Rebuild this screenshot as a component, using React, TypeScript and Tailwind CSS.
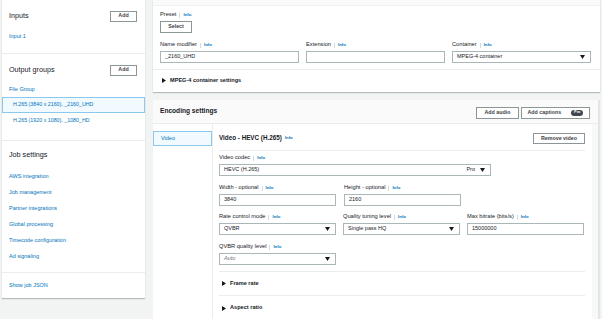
import React from "react";

const Info = () => (
  <>
    <span className="mx-[3px] w-px h-[5px] bg-[#d5dbdb]" />
    <span className="text-[4.3px] font-bold text-[#0073bb]">Info</span>
  </>
);

const Label = ({ text, info = true }: { text: string; info?: boolean }) => (
  <div className="h-[10px] flex items-center text-[5.7px] text-[#16191f] leading-none whitespace-nowrap">
    <span>{text}</span>
    {info && <Info />}
  </div>
);

const Arrow = () => (
  <svg width="5" height="4" viewBox="0 0 5 4" className="shrink-0">
    <path d="M0 0 L5 0 L2.5 4 Z" fill="#16191f" />
  </svg>
);

const Caret = () => (
  <svg width="4" height="5" viewBox="0 0 4 5" className="shrink-0">
    <path d="M0 0 L4 2.5 L0 5 Z" fill="#16191f" />
  </svg>
);

const Input = ({ value, w }: { value: string; w: string }) => (
  <div className={`${w} h-[12px] border border-[#aab7b8] bg-white flex items-center px-[4px] text-[5.5px] text-[#16191f] leading-none`}>
    {value}
  </div>
);

const Select = ({ value, w, italic, pro }: { value: string; w: string; italic?: boolean; pro?: boolean }) => (
  <div className={`${w} h-[12px] border border-[#aab7b8] bg-white flex items-center pl-[4px] pr-[5px] text-[5.5px] leading-none`}>
    <span className={italic ? "italic text-[#687078] flex-1" : "text-[#16191f] flex-1"}>{value}</span>
    {pro && <span className="text-[#16191f] mr-[5px]">Pro</span>}
    <Arrow />
  </div>
);

const Button = ({ children, w }: { children: React.ReactNode; w: string }) => (
  <div className={`${w} h-[12px] border border-[#8d9696] bg-white flex items-center justify-center text-[5.3px] font-bold text-[#3b4148] leading-none whitespace-nowrap`}>
    {children}
  </div>
);

const Link = ({ text, pl = "pl-[7px]" }: { text: string; pl?: string }) => (
  <div className={`h-[16px] flex items-center ${pl} text-[5.5px] text-[#0073bb] leading-none whitespace-nowrap`}>{text}</div>
);

const Heading = ({ text, button }: { text: string; button?: boolean }) => (
  <div className="h-[22px] flex items-center justify-between pl-[7px] pr-[8px]">
    <span className="text-[7.2px] text-[#16191f] leading-none">{text}</span>
    {button && <Button w="w-[27px] !h-[11px]">Add</Button>}
  </div>
);

export default function App() {
  return (
    <div className="w-[602px] h-[319px] bg-[#f2f3f3] flex gap-[8px] pl-[2px] overflow-hidden font-['Liberation_Sans',Arial,sans-serif]">
      {/* Left panel */}
      <div className="w-[143px] h-[298px] bg-white shadow-[0_1px_1px_rgba(0,28,36,0.25)] flex flex-col shrink-0">
        <div className="h-[54px] border-b border-[#eaeded] pt-[5px]">
          <Heading text="Inputs" button />
          <div className="mt-[5px] h-[10px] flex items-center pl-[7px] text-[5.5px] text-[#0073bb] leading-none">Input 1</div>
        </div>
        <div className="h-[87px] border-b border-[#eaeded] pt-[5px]">
          <Heading text="Output groups" button />
          <div className="mt-[4px] h-[10px] flex items-center pl-[7px] text-[5.5px] text-[#0073bb] leading-none">File Group</div>
          <div className="mt-[2px] h-[16px] border border-[#8cc8ec] bg-[#f1faff] flex items-center pl-[10px] text-[5.3px] text-[#0073bb] leading-none">
            H.265 (3840 x 2160), _2160_UHD
          </div>
          <div className="h-[16px] flex items-center pl-[11px] text-[5.3px] text-[#0073bb] leading-none">
            H.265 (1920 x 1080), _1080_HD
          </div>
        </div>
        <div className="h-[132px] border-b border-[#eaeded] pt-[3px]">
          <Heading text="Job settings" />
          <div className="mt-[3px]">
            <Link text="AWS integration" />
            <Link text="Job management" />
            <Link text="Partner integrations" />
            <Link text="Global processing" />
            <Link text="Timecode configuration" />
            <Link text="Ad signaling" />
          </div>
        </div>
        <div className="pt-[5px]">
          <Link text="Show job JSON" />
        </div>
      </div>

      {/* Right column */}
      <div className="w-[447px] flex flex-col gap-[8px] shrink-0">
        {/* Top panel */}
        <div className="h-[92px] bg-white shadow-[0_1px_1px_rgba(0,28,36,0.25)] flex flex-col shrink-0">
          <div className="h-[6px] bg-[#fafafa] border-b border-[#f0f1f1]" />
          <div className="pl-[7px] pr-[9px]">
            <div className="mt-[4px]"><Label text="Preset" /></div>
            <div className="mt-[1px]"><Button w="w-[32px]">Select</Button></div>
            <div className="mt-[7px] flex gap-[7px]">
              <div className="w-[139px]"><Label text="Name modifier" /></div>
              <div className="w-[139px]"><Label text="Extension" /></div>
              <div className="w-[139px]"><Label text="Container" /></div>
            </div>
            <div className="mt-[1px] flex gap-[7px]">
              <Input value="_2160_UHD" w="w-[139px]" />
              <Input value="" w="w-[139px]" />
              <Select value="MPEG-4 container" w="w-[139px]" />
            </div>
          </div>
          <div className="mt-[6px] border-b border-[#eaeded]" />
          <div className="h-[21px] flex items-center gap-[4px] pl-[9px] text-[5.6px] font-bold text-[#16191f] leading-none">
            <Caret />
            <span>MPEG-4 container settings</span>
          </div>
        </div>

        {/* Encoding settings panel */}
        <div className="flex-1 bg-white flex flex-col border-r-[2px] border-[#e4e6e6]">
          <div className="h-[24px] bg-[#fafafa] border-b border-[#eaeded] flex items-center justify-between pl-[7px] pr-[8px] shrink-0">
            <span className="text-[6.6px] font-bold text-[#16191f] leading-none">Encoding settings</span>
            <div className="flex gap-[2px] mt-[2px]">
              <Button w="w-[43px]">Add audio</Button>
              <Button w="w-[69px]">
                <span>Add captions</span>
                <span className="ml-[10px] h-[6px] px-[3px] rounded-full bg-[#414750] text-white text-[3.8px] flex items-center">Pro</span>
              </Button>
            </div>
          </div>
          <div className="flex flex-1">
            <div className="w-[60px] border-r border-[#eaeded] pt-[7px] shrink-0">
              <div className="h-[15px] border border-[#8cc8ec] bg-[#f1faff] flex items-center pl-[7px] text-[5.5px] text-[#0073bb] leading-none">Video</div>
            </div>
            <div className="w-[379px] pl-[6px] pr-[7px] shrink-0">
              <div className="mt-[7px] h-[15px] flex items-center justify-between">
                <div className="flex items-center leading-none">
                  <span className="text-[6.3px] font-semibold text-[#16191f]">Video - HEVC (H.265)</span>
                  <span className="ml-[3px] text-[4.3px] font-bold text-[#0073bb]">Info</span>
                </div>
                <Button w="w-[52px] !h-[11px]">Remove video</Button>
              </div>
              <div className="mt-[4px] border-b border-[#eaeded]" />
              <div className="mt-[2px]"><Label text="Video codec" /></div>
              <div className="mt-[1px]"><Select value="HEVC (H.265)" w="w-[272px]" pro /></div>
              <div className="mt-[7px] flex gap-[8px]">
                <div className="w-[117px]"><Label text="Width - optional" /></div>
                <div className="w-[117px]"><Label text="Height - optional" /></div>
              </div>
              <div className="mt-[1px] flex gap-[8px]">
                <Input value="3840" w="w-[117px]" />
                <Input value="2160" w="w-[117px]" />
              </div>
              <div className="mt-[6px] flex gap-[7px]">
                <div className="w-[117px]"><Label text="Rate control mode" /></div>
                <div className="w-[117px]"><Label text="Quality tuning level" /></div>
                <div className="w-[117px]"><Label text="Max bitrate (bits/s)" /></div>
              </div>
              <div className="mt-[1px] flex gap-[7px]">
                <Select value="QVBR" w="w-[117px]" />
                <Select value="Single pass HQ" w="w-[117px]" />
                <Input value="15000000" w="w-[117px]" />
              </div>
              <div className="mt-[7px]"><Label text="QVBR quality level" /></div>
              <div className="mt-[1px]"><Select value="Auto" w="w-[117px]" italic /></div>
              <div className="mt-[6px] border-b border-[#eaeded]" />
              <div className="h-[24px] border-b border-[#eaeded] flex items-center gap-[4px] pl-[3px] text-[5.6px] font-bold text-[#16191f] leading-none">
                <Caret />
                <span>Frame rate</span>
              </div>
              <div className="h-[24px] flex items-center gap-[4px] pl-[3px] text-[5.6px] font-bold text-[#16191f] leading-none">
                <Caret />
                <span>Aspect ratio</span>
              </div>
            </div>
            <div className="flex-1 bg-[#f7f8f8]" />
          </div>
        </div>
      </div>
    </div>
  );
}
